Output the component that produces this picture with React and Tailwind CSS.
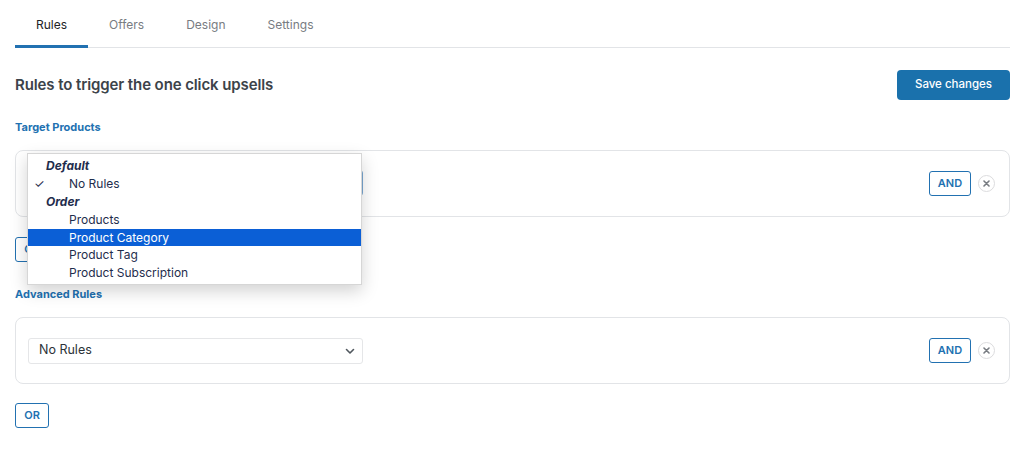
import React, { useState } from "react";

const tabs = ["Rules", "Offers", "Design", "Settings"];

const options = [
  { group: "Default" },
  { label: "No Rules", checked: true },
  { group: "Order" },
  { label: "Products" },
  { label: "Product Category", active: true },
  { label: "Product Tag" },
  { label: "Product Subscription" },
];

function Chevron() {
  return (
    <svg width="12" height="12" viewBox="0 0 12 12" fill="none">
      <path d="M2.5 4.5 L6 8 L9.5 4.5" stroke="#50575e" strokeWidth="1.6" strokeLinecap="round" strokeLinejoin="round" />
    </svg>
  );
}

function RemoveIcon() {
  return (
    <span className="flex h-[17px] w-[17px] items-center justify-center rounded-full border border-[#dcdcde] bg-white">
      <svg width="7" height="7" viewBox="0 0 7 7">
        <path d="M1 1 L6 6 M6 1 L1 6" stroke="#787c82" strokeWidth="1.6" strokeLinecap="round" />
      </svg>
    </span>
  );
}

function RuleCard({ focused, children }) {
  return (
    <div className="relative flex h-[67px] items-center rounded-lg border border-[#e2e4e7] bg-white pl-3 pr-[14px]">
      <div
        className={`flex h-[26px] w-[335px] items-center justify-between rounded-[3px] border bg-white pl-[10px] pr-[6px] text-[12.5px] text-[#2c3338] ${
          focused ? "border-[#7aa7d1]" : "border-[#e5e6e8]"
        }`}
      >
        {/* open select: its label sits under the menu */}
        <span>{focused ? "" : "No Rules"}</span>
        <Chevron />
      </div>
      <div className="ml-auto flex items-center gap-[7px]">
        <button className="h-[25px] w-[42px] rounded-[3px] border border-[#2271b1] bg-white text-[11px] font-semibold text-[#2271b1]">
          AND
        </button>
        <RemoveIcon />
      </div>
      {children}
    </div>
  );
}

export default function App() {
  const [tab, setTab] = useState("Rules");

  return (
    <div
      className="min-h-screen bg-white pl-[15px] pr-[14px] text-[#3c434a]"
      style={{ fontFamily: "Inter, 'Liberation Sans', sans-serif" }}
    >
      {/* Tabs */}
      <div className="flex h-[48px] border-b border-[#e2e4e7]">
        {tabs.map((t) => (
          <button
            key={t}
            onClick={() => setTab(t)}
            className={`relative px-[21px] pt-[3px] text-[12px] ${
              tab === t ? "text-[#1d2327]" : "text-[#787c82]"
            }`}
          >
            {t}
            {tab === t && (
              <span className="absolute bottom-[-1px] left-0 right-0 h-[3px] bg-[#2271b1]" />
            )}
          </button>
        ))}
      </div>

      {/* Header */}
      <div className="mt-[22px] flex items-center justify-between">
        <h2 className="text-[15px] font-semibold tracking-[-0.1px] text-[#3c434a]">
          Rules to trigger the one click upsells
        </h2>
        <button className="h-[30px] w-[113px] rounded-[4px] bg-[#1a71ac] text-[11.5px] font-medium text-white">
          Save changes
        </button>
      </div>

      {/* Target products */}
      <h3 className="mt-[19px] text-[11px] font-bold text-[#2271b1]">Target Products</h3>
      <div className="mt-[14px]">
        <RuleCard focused>
          <div className="absolute left-[11px] top-[2px] z-10 w-[335px] border border-[#d6d6d6] bg-white pb-[2px] pt-[4px] text-[12px] shadow-[0_6px_16px_rgba(0,0,0,0.18)]">
            {options.map((o, i) =>
              o.group ? (
                <div key={i} className="flex h-[17.8px] items-center pl-[18px] font-bold italic text-[#1f2d4d]">
                  {o.group}
                </div>
              ) : (
                <div
                  key={i}
                  className={`relative flex h-[17.8px] items-center pl-[41px] ${
                    o.active ? "bg-[#0b5fd6] text-white" : "text-[#1f2d4d]"
                  }`}
                >
                  {o.checked && <span className="absolute left-[6px] text-[12px]">✓</span>}
                  {o.label}
                </div>
              )
            )}
          </div>
        </RuleCard>
      </div>
      <button className="mt-[20px] h-[25px] w-[34px] rounded-[3px] border border-[#2271b1] bg-white text-[11px] font-semibold text-[#2271b1]">
        OR
      </button>

      {/* Advanced rules */}
      <h3 className="mt-[24px] text-[11px] font-bold text-[#2271b1]">Advanced Rules</h3>
      <div className="mt-[15px]">
        <RuleCard />
      </div>
      <button className="mt-[19px] h-[25px] w-[34px] rounded-[3px] border border-[#2271b1] bg-white text-[11px] font-semibold text-[#2271b1]">
        OR
      </button>
    </div>
  );
}
